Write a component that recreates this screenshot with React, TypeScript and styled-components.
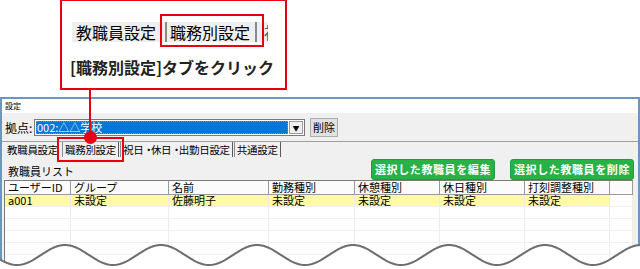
import React from "react";
import styled, { createGlobalStyle } from "styled-components";

const RED = "#e60012";

const GlobalStyle = createGlobalStyle`
  html, body {
    margin: 0;
    padding: 0;
    background: #fff;
  }
  body {
    font-family: "Noto Sans CJK JP", "Noto Sans", sans-serif;
    color: #000;
  }
`;

const Page = styled.div`
  position: relative;
  width: 640px;
  height: 269px;
  overflow: hidden;
  background: #fff;
`;

const CalloutArea = styled.div`
  height: 97px;
  padding-left: 60px;
  box-sizing: border-box;
`;

const Callout = styled.div`
  width: 227px;
  height: 90px;
  border: 2px solid ${RED};
  border-top-width: 1px;
  box-sizing: border-box;
  display: flex;
  flex-direction: column;
  align-items: flex-start;
  padding: 21px 0 0 10px;
`;

const MiniStrip = styled.div`
  display: flex;
  align-items: center;
  width: 196px;
  height: 20px;
  background: #efefef;
  font-size: 16px;
  line-height: 20px;
`;

const MiniTab = styled.span<{ $raised?: boolean }>`
  padding: 0 4px;
  height: 20px;
  box-sizing: border-box;
  white-space: nowrap;
  ${(p) =>
    p.$raised
      ? `border-left: 2px solid #8a8a8a; border-right: 2px solid #8a8a8a; padding: 0 5px 0 3px;`
      : ""}
`;

const MiniHighlight = styled.span`
  align-self: flex-start;
  margin-top: -8px;
  padding: 6px 5px 3px 3px;
  border: 2px solid ${RED};
  display: flex;
`;

const MiniCut = styled.span`
  width: 6px;
  overflow: hidden;
  white-space: nowrap;
  color: #555;
`;

const CalloutText = styled.div`
  margin-top: 14px;
  margin-left: -2px;
  font-size: 16px;
  font-weight: 700;
  line-height: 22px;
  color: #222;
`;

const Connector = styled.div`
  position: absolute;
  left: 89px;
  top: 88px;
  width: 2px;
  height: 48px;
  background: ${RED};
`;

const Dot = styled.div`
  position: absolute;
  left: 84px;
  top: 131px;
  width: 13px;
  height: 13px;
  border-radius: 50%;
  background: ${RED};
`;

const Window = styled.div`
  height: 172px;
  border: 2px solid #6a96c2;
  border-bottom: none;
  box-sizing: border-box;
  background: #f0f0f0;
  display: flex;
  flex-direction: column;
`;

const TitleBar = styled.div`
  height: 14px;
  background: #fff;
  font-size: 8px;
  line-height: 14px;
  padding-left: 3px;
`;

const BaseRow = styled.div`
  display: flex;
  align-items: center;
  height: 19px;
  margin-top: 5px;
  padding-left: 3px;
`;

const Label = styled.span`
  font-size: 12px;
  width: 29px;
`;

const Select = styled.div`
  display: flex;
  width: 271px;
  height: 17px;
  border: 1px solid #7a7a7a;
  box-sizing: border-box;
  background: #fff;
`;

const SelectValue = styled.div`
  flex: 1;
  margin: 1px;
  background: #0078d7;
  color: #fff;
  font-size: 11px;
  line-height: 13px;
  padding-left: 1px;
  outline: 1px dotted #c08040;
  outline-offset: -1px;
`;

const ArrowButton = styled.div`
  width: 12px;
  display: flex;
  align-items: center;
  justify-content: center;
  font-size: 7px;
  border: 1px solid #9a9a9a;
  background: #f0f0f0;
  margin: 1px 1px 1px 0;
`;

const Button = styled.div`
  margin-left: 5px;
  width: 28px;
  height: 19px;
  border: 1px solid #adadad;
  box-sizing: border-box;
  background: #e1e1e1;
  font-size: 11px;
  line-height: 17px;
  text-align: center;
`;

const Separator = styled.div`
  margin-top: 4px;
  border-top: 1px solid #a0a0a0;
`;

const TabRow = styled.div`
  display: flex;
  align-items: center;
  height: 16px;
  padding-left: 3px;
  font-size: 10.5px;
`;

const Tab = styled.span<{ $selected?: boolean; $marked?: boolean }>`
  height: 15px;
  line-height: 15px;
  padding: 0 2px;
  box-sizing: border-box;
  white-space: nowrap;
  letter-spacing: -0.3px;
  ${(p) =>
    p.$selected
      ? "margin-right: 2px;"
      : "border-left: 1px solid #8c8c8c; border-right: 1px solid #5a5a5a; margin-right: 1px;"}
  ${(p) => (p.$marked ? `outline: 2px solid ${RED}; outline-offset: 3px;` : "")}
`;

const Dotted = styled.span`
  letter-spacing: -3px;
`;

const ListBar = styled.div`
  display: flex;
  align-items: center;
  justify-content: space-between;
  height: 28px;
  padding: 2px 4px 0 6px;
  box-sizing: border-box;
`;

const ListTitle = styled.span`
  font-size: 11px;
  margin-top: 2px;
`;

const Actions = styled.div`
  display: flex;
  gap: 15px;
`;

const GreenButton = styled.div`
  width: 124px;
  height: 21px;
  border: 1px solid #1e9c3a;
  border-radius: 3px;
  box-sizing: border-box;
  background: #27b146;
  color: #fff;
  font-size: 11px;
  font-weight: 700;
  letter-spacing: 0.6px;
  line-height: 19px;
  text-align: center;
`;

const COLS = "66px 98px 100px 86px 85px 85px 85px 1fr";

const Grid = styled.div`
  margin: 0 5px 0 2px;
  flex: 1;
  background: #fff;
  border-top: 1px solid #7a7a7a;
  border-left: 1px solid #7a7a7a;
  display: flex;
  flex-direction: column;
`;

const HeaderRow = styled.div`
  display: grid;
  grid-template-columns: ${COLS};
  height: 14px;
`;

const HeaderCell = styled.div`
  background: #fbfbfb;
  border-right: 1px solid #9a9a9a;
  border-bottom: 1px solid #9a9a9a;
  font-size: 11px;
  line-height: 13px;
  padding-left: 3px;
  white-space: nowrap;
`;

const BodyRow = styled.div`
  display: grid;
  grid-template-columns: ${COLS};
  height: 11px;
  border-bottom: 1px solid #f0f0f0;
`;

const Cell = styled.div<{ $hit?: boolean }>`
  background: ${(p) => (p.$hit ? "#fffaa6" : "#fff")};
  border-right: 1px solid #ececec;
  font-size: 11px;
  line-height: 11px;
  padding-left: 3px;
  white-space: nowrap;
`;

const Wave = styled.svg`
  position: absolute;
  left: 0;
  bottom: 0;
`;

const headers = ["ユーザーID", "グループ", "名前", "勤務種別", "休憩種別", "休日種別", "打刻調整種別", ""];
const firstRow = ["a001", "未設定", "佐藤明子", "未設定", "未設定", "未設定", "未設定"];

const wavePath = () => {
  const pts: string[] = [];
  for (let x = 0; x <= 640; x += 2) {
    const y = 18 - 10 * Math.cos((2 * Math.PI * (x - 65)) / 96);
    pts.push(`${x},${y.toFixed(2)}`);
  }
  return pts;
};

export default function App() {
  const pts = wavePath();
  return (
    <Page>
      <GlobalStyle />
      <CalloutArea>
        <Callout>
          <MiniStrip>
            <MiniTab>教職員設定</MiniTab>
            <MiniHighlight>
              <MiniTab $raised>職務別設定</MiniTab>
            </MiniHighlight>
            <MiniCut>祝</MiniCut>
          </MiniStrip>
          <CalloutText>[職務別設定]タブをクリック</CalloutText>
        </Callout>
      </CalloutArea>
      <Window>
        <TitleBar>設定</TitleBar>
        <BaseRow>
          <Label>拠点:</Label>
          <Select>
            <SelectValue>002:△△学校</SelectValue>
            <ArrowButton>▼</ArrowButton>
          </Select>
          <Button>削除</Button>
        </BaseRow>
        <Separator />
        <TabRow>
          <Tab $selected>教職員設定</Tab>
          <Tab $marked>職務別設定</Tab>
          <Tab>
            祝日<Dotted>・</Dotted>休日<Dotted>・</Dotted>出勤日設定
          </Tab>
          <Tab>共通設定</Tab>
        </TabRow>
        <ListBar>
          <ListTitle>教職員リスト</ListTitle>
          <Actions>
            <GreenButton>選択した教職員を編集</GreenButton>
            <GreenButton>選択した教職員を削除</GreenButton>
          </Actions>
        </ListBar>
        <Grid>
          <HeaderRow>
            {headers.map((h, i) => (
              <HeaderCell key={i}>{h}</HeaderCell>
            ))}
          </HeaderRow>
          <BodyRow>
            {firstRow.map((v, i) => (
              <Cell key={i} $hit>
                {v}
              </Cell>
            ))}
            <Cell />
          </BodyRow>
          {[0, 1, 2, 3, 4, 5].map((r) => (
            <BodyRow key={r}>
              {headers.map((_, i) => (
                <Cell key={i} />
              ))}
            </BodyRow>
          ))}
        </Grid>
      </Window>
      <Connector />
      <Dot />
      <Wave width="640" height="32" viewBox="0 0 640 32">
        <path d={`M0,32 L${pts.join(" L")} L640,32 Z`} fill="#fff" />
        <path d={`M${pts.join(" L")}`} fill="none" stroke="#6e6e6e" strokeWidth="2" />
      </Wave>
    </Page>
  );
}
